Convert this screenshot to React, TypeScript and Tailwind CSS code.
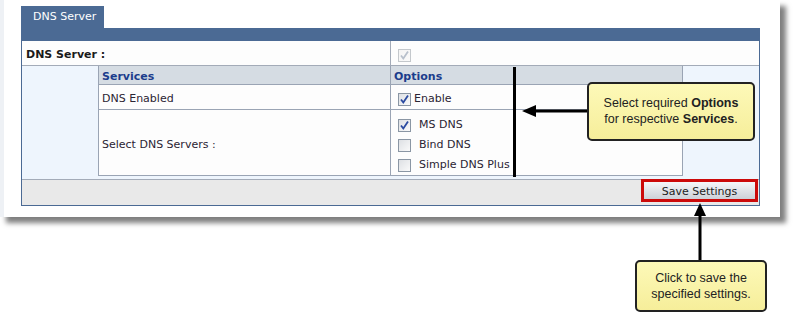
import React from 'react';

function Box({ checked, disabled }: { checked?: boolean; disabled?: boolean }) {
  return (
    <svg width="13" height="13" viewBox="0 0 13 13" className="shrink-0">
      <defs>
        <linearGradient id={disabled ? 'gd' : 'gn'} x1="0" y1="0" x2="1" y2="1">
          <stop offset="0" stopColor={disabled ? '#f4f4f4' : '#dcdfe3'} />
          <stop offset="1" stopColor={disabled ? '#fafafa' : '#fbfbfb'} />
        </linearGradient>
      </defs>
      <rect x="0.5" y="0.5" width="12" height="12" fill={`url(#${disabled ? 'gd' : 'gn'})`} stroke={disabled ? '#c4c8cc' : '#8a96a4'} />
      {checked && (
        <path d="M3 6.5 L5.3 9.5 L10 2.5" fill="none" stroke={disabled ? '#b8c0cc' : '#2a4aa0'} strokeWidth="1.8" />
      )}
    </svg>
  );
}

function Option({ label, checked }: { label: string; checked?: boolean }) {
  return (
    <div className="flex items-center gap-[8px] h-[21px]">
      <Box checked={checked} />
      <span>{label}</span>
    </div>
  );
}

export default function App() {
  return (
    <div className="relative w-[795px] h-[333px] bg-white font-['DejaVu_Sans',sans-serif] text-[11px] text-[#2b2433]">
      {/* card */}
      <div className="w-[780px] h-[217px] bg-white border-l-4 border-[#eef1f5] shadow-[6px_6px_5px_rgba(0,0,0,0.5)] pt-[6px] pl-[17px]">
        <div className="w-[83px] h-[22px] bg-[#4b6a94] text-white leading-[22px] pl-[12px]">DNS Server</div>
        <div className="w-[739px] bg-[#4b6a94] pt-[13px] px-px pb-px">
          {/* top row */}
          <div className="flex h-[25px] bg-[#fdfdfd] border-b border-[#a3abb8]">
            <div className="w-[368px] flex items-center pt-[5px] pl-[4px] font-bold text-[#1a1a1a]">DNS Server :</div>
            <div className="flex-1 flex items-center pt-[4px] pl-[7px] border-l border-[#a3abb8]">
              <Box checked disabled />
            </div>
          </div>
          {/* services section */}
          <div className="bg-[#eef5fd] pl-[76px] pb-[3px]">
            <div className="w-[585px] border border-t-0 border-[#9aa4b4] bg-[#fdfdfd]">
              <div className="flex h-[19px] bg-[#d5dce3] border-b border-[#9aa4b4] font-bold text-[#1c3d8c]">
                <div className="w-[291px] flex items-center pt-[5px] pl-[3px]">Services</div>
                <div className="flex-1 flex items-center pt-[5px] pl-[3px] border-l border-[#9aa4b4]">Options</div>
              </div>
              <div className="flex h-[25px] border-b border-[#9aa4b4]">
                <div className="w-[291px] flex items-center pt-[5px] pl-[3px]">DNS Enabled</div>
                <div className="flex-1 flex items-center gap-[3px] pt-[5px] pl-[7px] border-l border-[#9aa4b4]">
                  <Box checked />
                  <span>Enable</span>
                </div>
              </div>
              <div className="flex h-[65px]">
                <div className="w-[291px] flex items-center pt-[5px] pl-[3px]">Select DNS Servers :</div>
                <div className="flex-1 flex flex-col justify-center pt-[5px] pl-[7px] border-l border-[#9aa4b4]">
                  <Option label="MS DNS" checked />
                  <Option label="Bind DNS" />
                  <Option label="Simple DNS Plus" />
                </div>
              </div>
            </div>
          </div>
          {/* footer */}
          <div className="flex justify-end h-[26px] bg-[#e9e9e9] border-t border-[#a3abb8] pr-[1px]">
            <div className="-mt-px w-[117px] h-[23px] border-[3px] border-[#cc0a0a] bg-gradient-to-b from-[#f6f7f9] to-[#ccd1d8] flex items-center justify-center pt-[4px] text-[#222]">
              Save Settings
            </div>
          </div>
        </div>
      </div>

      {/* annotations */}
      <div className="absolute left-[513px] top-[67px] w-[3px] h-[110px] bg-black" />
      <svg className="absolute left-[520px] top-[103px]" width="70" height="16" viewBox="0 0 70 16">
        <path d="M2 8 L16 2 L16 14 Z" fill="black" />
        <rect x="14" y="6.5" width="56" height="3" fill="black" />
      </svg>
      <div className="absolute left-[587px] top-[82px] w-[168px] h-[59px] rounded-[5px] border-2 border-[#222] bg-gradient-to-b from-[#fdf9b8] to-[#f6ee9a] flex flex-col items-center justify-center pb-[2px] font-['Liberation_Sans',Arial,sans-serif] text-[12.5px] leading-[16px] text-[#222]">
        <div>Select required <b>Options</b></div>
        <div>for respective <b>Services</b>.</div>
      </div>

      <svg className="absolute left-[692px] top-[202px]" width="16" height="60" viewBox="0 0 16 60">
        <path d="M8 1 L2 14 L14 14 Z" fill="black" />
        <rect x="6.5" y="12" width="3" height="48" fill="black" />
      </svg>
      <div className="absolute left-[635px] top-[260px] w-[132px] h-[52px] rounded-[5px] border-2 border-[#222] bg-gradient-to-b from-[#fdf9b8] to-[#f6ee9a] flex flex-col items-center justify-center font-['Liberation_Sans',Arial,sans-serif] text-[12.5px] leading-[16px] text-[#222]">
        <div>Click to save the</div>
        <div>specified settings.</div>
      </div>
    </div>
  );
}
